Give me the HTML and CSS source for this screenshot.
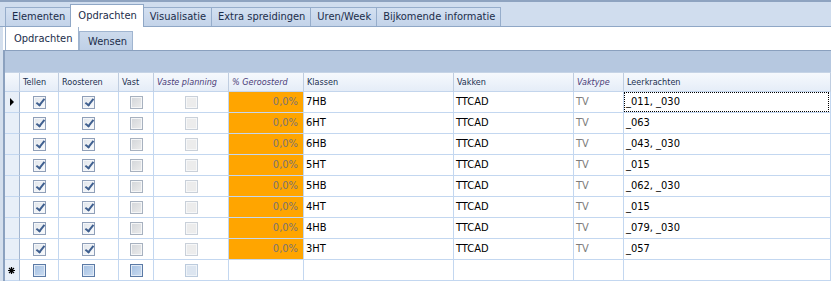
FILE: index.html
```html
<!DOCTYPE html>
<html>
<head>
<meta charset="utf-8">
<link rel="stylesheet" href="styles.css">
</head>
<body>
<div class="app">
  <div class="tabs">
    <div class="tab">Elementen</div>
    <div class="tab active">Opdrachten</div>
    <div class="tab">Visualisatie</div>
    <div class="tab">Extra spreidingen</div>
    <div class="tab">Uren/Week</div>
    <div class="tab">Bijkomende informatie</div>
  </div>
  <div class="subtabs">
    <div class="subtab active">Opdrachten</div>
    <div class="subtab">Wensen</div>
  </div>
  <div class="grid">
    <div class="group-panel"></div>
    <div class="row head">
      <div class="c ind"></div>
      <div class="c">Tellen</div>
      <div class="c">Roosteren</div>
      <div class="c">Vast</div>
      <div class="c it">Vaste planning</div>
      <div class="c it">% Geroosterd</div>
      <div class="c">Klassen</div>
      <div class="c">Vakken</div>
      <div class="c it">Vaktype</div>
      <div class="c">Leerkrachten</div>
    </div>

    <div class="row">
      <div class="c ind"><span class="arrow"></span></div>
      <div class="c ck"><span class="cb on"></span></div>
      <div class="c ck"><span class="cb on"></span></div>
      <div class="c ck"><span class="cb off"></span></div>
      <div class="c ck"><span class="cb dis"></span></div>
      <div class="c pct">0,0%</div>
      <div class="c">7HB</div>
      <div class="c">TTCAD</div>
      <div class="c gray">TV</div>
      <div class="c focus"><span class="focus-box">_011, _030</span></div>
    </div>
    <div class="row">
      <div class="c ind"></div>
      <div class="c ck"><span class="cb on"></span></div>
      <div class="c ck"><span class="cb on"></span></div>
      <div class="c ck"><span class="cb off"></span></div>
      <div class="c ck"><span class="cb dis"></span></div>
      <div class="c pct">0,0%</div>
      <div class="c">6HT</div>
      <div class="c">TTCAD</div>
      <div class="c gray">TV</div>
      <div class="c">_063</div>
    </div>
    <div class="row">
      <div class="c ind"></div>
      <div class="c ck"><span class="cb on"></span></div>
      <div class="c ck"><span class="cb on"></span></div>
      <div class="c ck"><span class="cb off"></span></div>
      <div class="c ck"><span class="cb dis"></span></div>
      <div class="c pct">0,0%</div>
      <div class="c">6HB</div>
      <div class="c">TTCAD</div>
      <div class="c gray">TV</div>
      <div class="c">_043, _030</div>
    </div>
    <div class="row">
      <div class="c ind"></div>
      <div class="c ck"><span class="cb on"></span></div>
      <div class="c ck"><span class="cb on"></span></div>
      <div class="c ck"><span class="cb off"></span></div>
      <div class="c ck"><span class="cb dis"></span></div>
      <div class="c pct">0,0%</div>
      <div class="c">5HT</div>
      <div class="c">TTCAD</div>
      <div class="c gray">TV</div>
      <div class="c">_015</div>
    </div>
    <div class="row">
      <div class="c ind"></div>
      <div class="c ck"><span class="cb on"></span></div>
      <div class="c ck"><span class="cb on"></span></div>
      <div class="c ck"><span class="cb off"></span></div>
      <div class="c ck"><span class="cb dis"></span></div>
      <div class="c pct">0,0%</div>
      <div class="c">5HB</div>
      <div class="c">TTCAD</div>
      <div class="c gray">TV</div>
      <div class="c">_062, _030</div>
    </div>
    <div class="row">
      <div class="c ind"></div>
      <div class="c ck"><span class="cb on"></span></div>
      <div class="c ck"><span class="cb on"></span></div>
      <div class="c ck"><span class="cb off"></span></div>
      <div class="c ck"><span class="cb dis"></span></div>
      <div class="c pct">0,0%</div>
      <div class="c">4HT</div>
      <div class="c">TTCAD</div>
      <div class="c gray">TV</div>
      <div class="c">_015</div>
    </div>
    <div class="row">
      <div class="c ind"></div>
      <div class="c ck"><span class="cb on"></span></div>
      <div class="c ck"><span class="cb on"></span></div>
      <div class="c ck"><span class="cb off"></span></div>
      <div class="c ck"><span class="cb dis"></span></div>
      <div class="c pct">0,0%</div>
      <div class="c">4HB</div>
      <div class="c">TTCAD</div>
      <div class="c gray">TV</div>
      <div class="c">_079, _030</div>
    </div>
    <div class="row">
      <div class="c ind"></div>
      <div class="c ck"><span class="cb on"></span></div>
      <div class="c ck"><span class="cb on"></span></div>
      <div class="c ck"><span class="cb off"></span></div>
      <div class="c ck"><span class="cb dis"></span></div>
      <div class="c pct">0,0%</div>
      <div class="c">3HT</div>
      <div class="c">TTCAD</div>
      <div class="c gray">TV</div>
      <div class="c">_057</div>
    </div>
    <div class="row">
      <div class="c ind">
        <svg class="star" width="7" height="7" viewBox="0 0 7 7"><path d="M3.5 0V7M0 3.5H7M1 1L6 6M6 1L1 6" stroke="#000" stroke-width="1.2"/></svg>
      </div>
      <div class="c ck"><span class="cb new"></span></div>
      <div class="c ck"><span class="cb new"></span></div>
      <div class="c ck"><span class="cb new"></span></div>
      <div class="c ck"><span class="cb newdis"></span></div>
      <div class="c"></div>
      <div class="c"></div>
      <div class="c"></div>
      <div class="c"></div>
      <div class="c"></div>
    </div>
  </div>
</div>
</body>
</html>
```

FILE: styles.css
```css
* { box-sizing: border-box; }

body {
  margin: 0;
  background: #d4dfed;
  font-family: "DejaVu Sans Condensed", "Liberation Sans", Arial, sans-serif;
  font-size: 11px;
  color: #000;
}

.app {
  width: 831px;
  height: 281px;
  overflow: hidden;
}

/* outer tab strip */
.tabs {
  display: flex;
  align-items: flex-end;
  height: 27px;
  border-top: 2px solid #8ea3c0;
  border-bottom: 1px solid #8fa7c6;
  background: #d0ddee;
  padding-left: 5px;
}

.tab {
  height: 19px;
  line-height: 18px;
  padding: 0 5px 0 6px;
  background: linear-gradient(#d3e0f1, #c3d3e9);
  border: 1px solid #96adcb;
  border-bottom: none;
  margin-left: -1px;
  color: #1b2d4a;
  white-space: nowrap;
}
.tab:first-child { margin-left: 0; }

.tab.active {
  height: 23px;
  margin-bottom: -1px;
  background: #fff;
  border-color: #8fa7c6;
  line-height: 21px;
  padding: 0 6px 0 7px;
  position: relative;
  z-index: 1;
}

/* inner tab strip */
.subtabs {
  display: flex;
  align-items: flex-end;
  height: 23px;
  margin-left: 3px;
  padding-left: 2px;
  background: #fff;
}

.subtab {
  height: 19px;
  line-height: 19px;
  padding: 0 8px;
  background: linear-gradient(#ccdaec, #bfd0e6);
  border: 1px solid #a0b5d0;
  border-bottom: none;
  color: #1b2d4a;
}
.subtab.active {
  height: 23px;
  line-height: 24px;
  background: #fff;
  border-color: #9fb3cd;
  border-top: none;
  padding: 0 7px 0 8px;
  width: 74px;
}
.subtab.active + .subtab { width: 54px; }

/* grid */
.grid {
  margin-left: 3px;
  border-left: 2px solid #8ba1bf;
  border-top: 1px solid #8aa0be;
  background: #fff;
}

.group-panel {
  height: 22px;
  background: #b6c8e0;
  border-bottom: 1px solid #c6d4e6;
}

.row {
  display: grid;
  grid-template-columns: 15px 39px 60px 35px 75px 75px 150px 120px 50px 207px;
  height: 21px;
}

.c {
  border-right: 1px solid #c3d7f0;
  border-bottom: 1px solid #c3d7f0;
  padding-left: 2px;
  line-height: 20px;
  white-space: nowrap;
  overflow: hidden;
}

.head {
  height: 19px;
  background: linear-gradient(#f6f9fd, #e4ecf7);
}
.head .c {
  line-height: 18px;
  padding-left: 3px;
  font-size: 9px;
  color: #1a2f4f;
  border-right-color: #bfcde0;
  border-bottom-color: #c3d5ec;
}
.head .it {
  font-style: italic;
  color: #4a3c78;
}

.ind {
  background: #e8eff8;
  border-right-color: #a4b6cf;
  padding: 0;
  display: flex;
  align-items: center;
  justify-content: center;
}
.head .ind { background: transparent; }

.arrow {
  width: 0;
  height: 0;
  border-left: 4px solid #000;
  border-top: 4px solid transparent;
  border-bottom: 4px solid transparent;
  margin-left: -1px;
}

.star { margin-left: -2px; }

.ck {
  display: flex;
  align-items: center;
  justify-content: center;
  padding: 0;
}

.cb {
  position: relative;
  width: 13px;
  height: 13px;
  border: 1px solid #8f9fb8;
  box-shadow: inset 0 0 0 1px #f4f6f9;
  background: linear-gradient(135deg, #dfe4ea, #fbfcfd);
}

.cb.on::after {
  content: "";
  position: absolute;
  left: 4px;
  top: 0px;
  width: 3px;
  height: 7px;
  border-right: 2px solid #3f5f8f;
  border-bottom: 2px solid #3f5f8f;
  transform: rotate(38deg);
}

.cb.off {
  border-color: #a7b1bf;
  background: linear-gradient(135deg, #d2d5d9, #ececec);
  box-shadow: inset 0 0 0 1px #f5f6f7;
}

.cb.dis {
  border-color: #c9d0d9;
  background: #ececec;
  box-shadow: inset 0 0 0 1px #f6f7f8;
}

.cb.new {
  border-color: #5b7aa6;
  background: linear-gradient(135deg, #a3bfe2, #cbdcf0);
  box-shadow: inset 0 0 0 1px #e2ebf6;
}

.cb.newdis {
  border-color: #bccbdd;
  background: #dce5f0;
  box-shadow: inset 0 0 0 1px #eef3f8;
}

.pct {
  background: #ffa500;
  color: #7a7373;
  text-align: right;
  padding-right: 5px;
}

.gray { color: #7c7c7c; }

.c.focus { padding: 0; }
.focus-box {
  display: block;
  height: 20px;
  line-height: 18px;
  width: 205px;
  border: 1px dotted #000;
  padding-left: 1px;
}
```
